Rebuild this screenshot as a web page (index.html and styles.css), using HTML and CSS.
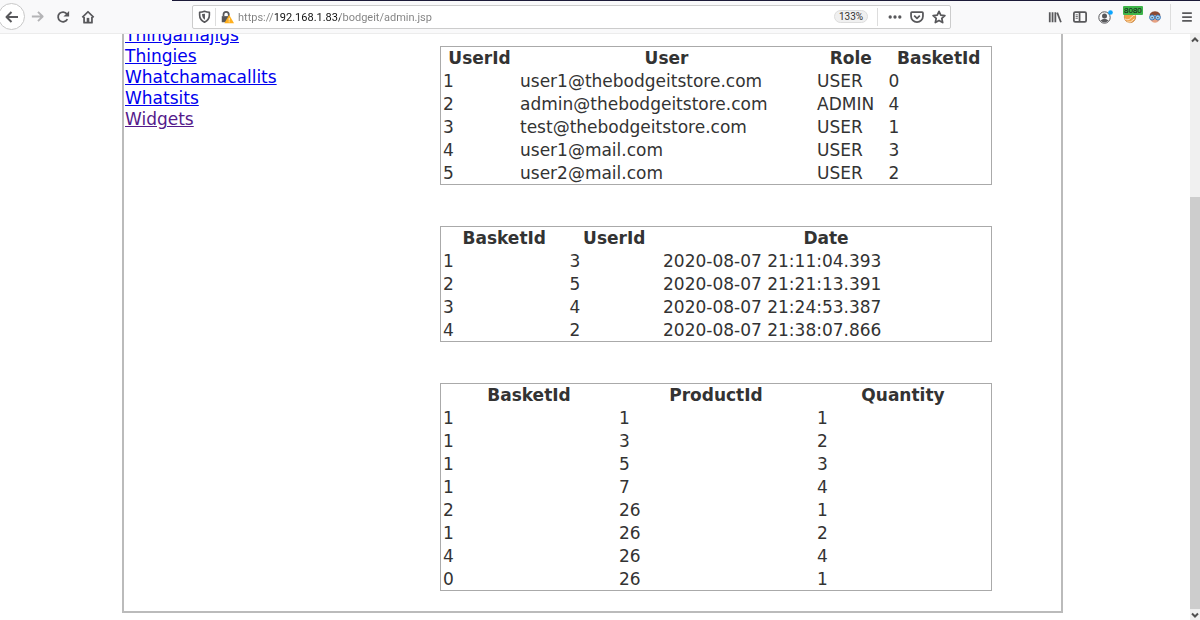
FILE: index.html
```
<!DOCTYPE html>
<html lang="en">

<head>
    <meta charset="utf-8">
    <title>The BodgeIt Store</title>
    <link rel="stylesheet" href="styles.css">
</head>

<body>

    <header class="toolbar">
        <div class="nav-buttons">
            <button class="tool-btn back-btn" aria-label="Back">
                <svg width="16" height="16" viewBox="0 0 16 16"><path d="M14 8H3M7.500 3L2.500 8l5 5" /></svg>
            </button>
            <button class="tool-btn disabled" aria-label="Forward" disabled>
                <svg width="15" height="15" viewBox="0 0 16 16"><path d="M2 8h11M8.500 3l5 5-5 5" /></svg>
            </button>
            <button class="tool-btn" aria-label="Reload">
                <svg width="14" height="14" viewBox="0 0 16 16"><path d="M13 10.500A5.600 5.600 0 1 1 12.500 4.500" /><path class="solid" d="M15 1v6.500H8.500z" /></svg>
            </button>
            <button class="tool-btn" aria-label="Home">
                <svg width="14" height="14" viewBox="0 0 16 16"><path d="M1.500 8.500L8 2l6.500 6.500M3.500 8v6.500h9V8" /><path class="solid" d="M6.500 9h3v5.500h-3z" /></svg>
            </button>
        </div>

        <div class="url-bar">
            <button class="tool-btn" aria-label="Tracking protection">
                <svg width="13" height="13" viewBox="0 0 16 16"><path d="M8 1.500Q11 2.500 14 2.800V6c0 4.500-2 7-6 9-4-2-6-4.500-6-9V2.800Q5 2.500 8 1.500z" /><path class="solid" d="M8.500 4.500v7.500c-2.500-1.500-3.500-3.500-3.500-7z" /></svg>
            </button>
            <span class="divider"></span>
            <button class="tool-btn" aria-label="Site information">
                <svg width="14" height="14" viewBox="0 0 16 16"><path d="M4 7V5a3 3 0 0 1 6 0v2" /><path class="solid" d="M2 7h9v7H2z" /><path class="warn" d="M10.500 5.500L16 15H5z" /><path class="warn-mark" d="M10.500 9v3M10.500 13v1" /></svg>
            </button>
            <input class="url-input" type="text" aria-label="Address" value="https://192.168.1.83/bodgeit/admin.jsp">
            <button class="zoom-btn">133%</button>
            <span class="divider actions-divider"></span>
            <button class="tool-btn" aria-label="Page actions">
                <svg width="14" height="14" viewBox="0 0 16 16"><circle class="solid" cx="2.500" cy="8" r="1.900" /><circle class="solid" cx="8" cy="8" r="1.900" /><circle class="solid" cx="13.500" cy="8" r="1.900" /></svg>
            </button>
            <button class="tool-btn" aria-label="Save to Pocket">
                <svg width="14" height="14" viewBox="0 0 16 16"><path d="M2.200 2.500h11.600q1 0 1 1V7a6.800 6.800 0 0 1-13.600 0V3.500q0-1 1-1zM4.800 6.500L8 9.600l3.200-3.100" /></svg>
            </button>
            <button class="tool-btn" aria-label="Bookmark this page">
                <svg width="14" height="14" viewBox="0 0 16 16"><path d="M8 1.500l2 4.400 4.700.5-3.500 3.200 1 4.800L8 12l-4.200 2.400 1-4.800L1.300 6.400 6 5.900z" /></svg>
            </button>
        </div>

        <div class="tools">
            <button class="tool-btn" aria-label="Library">
                <svg width="14" height="14" viewBox="0 0 16 16"><path d="M2 2.500V14M5.200 2.500V14M8.400 2.500V14M10.500 3l4.300 11" /></svg>
            </button>
            <button class="tool-btn" aria-label="Sidebars">
                <svg width="14" height="14" viewBox="0 0 16 16"><rect x="1" y="2.500" width="14" height="11" rx="1.500" /><path d="M7.500 3v10" /><path class="thin" d="M3 5.500h2.500M3 7.500h2.500M3 9.500h2.500" /></svg>
            </button>
            <button class="tool-btn" aria-label="Account">
                <svg width="16" height="16" viewBox="0 0 16 16"><circle class="thin" cx="7.500" cy="8.500" r="5.700" /><circle class="solid" cx="7.500" cy="7" r="2.500" /><path class="solid" d="M3.500 11.500q4-3.500 8 0-4 4-8 0z" /><circle class="notice" cx="13.500" cy="3.500" r="2.300" /></svg>
            </button>
            <button class="tool-btn proxy-btn" aria-label="Proxy">
                <svg width="14" height="14" viewBox="0 0 16 16"><circle class="fox" cx="8" cy="8" r="6.500" /><path class="fox-tail" d="M2 10q4 3 7-1t5-3M4 14q5 1 9-4" /></svg>
                <span class="badge">8080</span>
            </button>
            <button class="tool-btn" aria-label="Extension">
                <svg width="14" height="14" viewBox="0 0 16 16"><path class="face" d="M3 6h10v6q-5 5-10 0z" /><path class="hair" d="M2 8Q1 2 8 1.500 15 2 14 8l-2-2H4z" /><circle class="glass" cx="4.700" cy="8.500" r="2.900" /><circle class="glass" cx="11.300" cy="8.500" r="2.900" /><path class="solid" d="M4 8h1.500v1.500H4zM10.500 8H12v1.500h-1.500z" /></svg>
            </button>
            <span class="divider menu-divider"></span>
            <button class="tool-btn" aria-label="Open menu">
                <svg width="14" height="14" viewBox="0 0 16 16"><path d="M2.500 3.500h11M2.500 8h11M2.500 12.500h11" /></svg>
            </button>
        </div>
    </header>

    <div class="window">
        <div class="viewport">
            <main class="page">
                <nav class="categories">
                    <a href="product.jsp?typeid=6">Thingamajigs</a>
                    <a href="product.jsp?typeid=3">Thingies</a>
                    <a href="product.jsp?typeid=5">Whatchamacallits</a>
                    <a href="product.jsp?typeid=4">Whatsits</a>
                    <a class="seen" href="product.jsp?typeid=1">Widgets</a>
                </nav>

                <section class="admin">
                    <table class="users">
                        <tr><th>UserId</th><th>User</th><th>Role</th><th>BasketId</th></tr>
                        <tr><td>1</td><td>user1@thebodgeitstore.com</td><td>USER</td><td>0</td></tr>
                        <tr><td>2</td><td>admin@thebodgeitstore.com</td><td>ADMIN</td><td>4</td></tr>
                        <tr><td>3</td><td>test@thebodgeitstore.com</td><td>USER</td><td>1</td></tr>
                        <tr><td>4</td><td>user1@mail.com</td><td>USER</td><td>3</td></tr>
                        <tr><td>5</td><td>user2@mail.com</td><td>USER</td><td>2</td></tr>
                    </table>

                    <table class="baskets">
                        <tr><th>BasketId</th><th>UserId</th><th>Date</th></tr>
                        <tr><td>1</td><td>3</td><td>2020-08-07 21:11:04.393</td></tr>
                        <tr><td>2</td><td>5</td><td>2020-08-07 21:21:13.391</td></tr>
                        <tr><td>3</td><td>4</td><td>2020-08-07 21:24:53.387</td></tr>
                        <tr><td>4</td><td>2</td><td>2020-08-07 21:38:07.866</td></tr>
                    </table>

                    <table class="contents">
                        <tr><th>BasketId</th><th>ProductId</th><th>Quantity</th></tr>
                        <tr><td>1</td><td>1</td><td>1</td></tr>
                        <tr><td>1</td><td>3</td><td>2</td></tr>
                        <tr><td>1</td><td>5</td><td>3</td></tr>
                        <tr><td>1</td><td>7</td><td>4</td></tr>
                        <tr><td>2</td><td>26</td><td>1</td></tr>
                        <tr><td>1</td><td>26</td><td>2</td></tr>
                        <tr><td>4</td><td>26</td><td>4</td></tr>
                        <tr><td>0</td><td>26</td><td>1</td></tr>
                    </table>
                </section>
            </main>
        </div>

        <div class="scrollbar">
            <button class="scroll-btn" aria-label="Scroll up">
                <svg width="8" height="8" viewBox="0 0 8 8"><path d="M1 5.500l3-3 3 3" /></svg>
            </button>
            <div class="track">
                <div class="thumb"></div>
            </div>
            <button class="scroll-btn" aria-label="Scroll down">
                <svg width="8" height="8" viewBox="0 0 8 8"><path d="M1 2.500l3 3 3-3" /></svg>
            </button>
        </div>
    </div>

</body>

</html>
```

FILE: styles.css
```
* {
    box-sizing: border-box;
}

body {
    margin: 0;
    height: 100vh;
    display: flex;
    flex-direction: column;
    overflow: hidden;
    background-color: #fff;
    color: #333;
    font-family: Verdana, "DejaVu Sans", sans-serif;
    font-size: 17px;
}

button {
    padding: 0;
    border: none;
    background: none;
    cursor: pointer;
}

/* browser toolbar */
.toolbar {
    display: flex;
    align-items: center;
    height: 34px;
    flex: none;
    padding-right: 1px;
    background: linear-gradient(#1c1a38, #1c1a38) 172px 0 / 100% 1px no-repeat #f9f9fa;
    border-bottom: 1px solid #ececec;
    font-family: "Segoe UI", Roboto, sans-serif;
}

.nav-buttons,
.tools {
    display: flex;
    align-items: center;
    flex: none;
}

.tool-btn {
    display: flex;
    align-items: center;
    justify-content: center;
    flex: none;
    width: 25px;
    height: 26px;
}

.tool-btn svg {
    fill: none;
    stroke: #58585b;
    stroke-width: 2;
    stroke-linejoin: round;
}

.tool-btn .solid {
    fill: #58585b;
    stroke: none;
}

.tool-btn .thin {
    stroke-width: 1;
}

.disabled svg {
    stroke: #b4b4b6;
}

.back-btn {
    width: 27px;
    height: 27px;
    margin-left: -2px;
    border: 1px solid #c8c8c8;
    border-radius: 50%;
    background-color: #fff;
}

.url-bar {
    display: flex;
    align-items: center;
    flex: 1;
    height: 24px;
    margin: 0 91px 0 92px;
    border: 1px solid #ccc;
    border-radius: 2px;
    background-color: #fff;
}

.url-bar .tool-btn {
    width: 22px;
    height: 22px;
}

.divider {
    width: 1px;
    height: 18px;
    background-color: #ddd;
}

.actions-divider {
    margin-right: 6px;
}

/* the host part of the address is darker than the rest */
.url-input {
    flex: 1;
    min-width: 0;
    height: 24px;
    padding: 2px 0 0;
    border: none;
    outline: none;
    font-family: inherit;
    font-size: 11px;
    color: transparent;
    caret-color: #333;
    background: linear-gradient(90deg, #808080 37px, #111 37px, #111 102px, #808080 102px);
    -webkit-background-clip: text;
    background-clip: text;
}

.zoom-btn {
    width: 34px;
    height: 13px;
    margin-right: 9px;
    border: 1px solid #ddd;
    border-radius: 8px;
    background-color: #f0f0f0;
    color: #333;
    font-family: inherit;
    font-size: 10px;
    line-height: 11px;
}

.tool-btn .warn {
    fill: #ffb01f;
    stroke: none;
}

.tool-btn .warn-mark {
    stroke: #fff;
    stroke-width: 1;
}

.notice {
    fill: #0aa5ff;
    stroke: none;
}

.fox {
    fill: #f2a34b;
    stroke: #c98a4a;
    stroke-width: 1;
}

.fox-tail {
    stroke: #fff0d8;
    stroke-width: 1;
}

.face {
    fill: #e7a283;
    stroke: none;
}

.hair {
    fill: #8c4a32;
    stroke: none;
}

.glass {
    fill: #9fd0f5;
    stroke: #2f6fb4;
    stroke-width: 1;
}

.proxy-btn {
    position: relative;
}

.badge {
    position: absolute;
    top: 2px;
    left: 6px;
    padding: 0 1px;
    border-radius: 1px;
    background-color: #3fb54a;
    color: #111;
    font-family: "Liberation Sans", sans-serif;
    font-size: 8px;
    line-height: 9px;
}

.menu-divider {
    height: 26px;
    margin: 0 3px;
}

/* page */
.window {
    display: flex;
    flex: 1;
    min-height: 0;
}

.viewport {
    flex: 1;
    overflow: hidden;
    padding: 0 127px 0 122px;
}

.page {
    display: flex;
    border: 2px solid #bbb;
    border-top: none;
}

/* the list starts a little above the visible part of the page */
.categories {
    width: 247px;
    flex: none;
    margin-top: -9px;
    padding-left: 1px;
    line-height: 21px;
}

.categories a {
    display: table;
    color: #00e;
}

.categories .seen {
    color: #551a8b;
}

.admin {
    display: flex;
    flex: 1;
    flex-direction: column;
    align-items: center;
    gap: 41px;
    padding: 12px 0 20px;
}

table {
    width: 80%;
    table-layout: fixed;
    border: 1px solid #aaa;
    border-spacing: 0;
}

th,
td {
    height: 23px;
    padding: 0 2px;
    line-height: 22px;
    text-align: left;
}

th {
    height: 22px;
    text-align: center;
}

.users th:nth-child(1) {
    width: 14%;
}

.users th:nth-child(2) {
    width: 54%;
}

.users th:nth-child(3) {
    width: 13%;
}

.baskets th:nth-child(1) {
    width: 23%;
}

.baskets th:nth-child(2) {
    width: 17%;
}

.contents th:nth-child(1) {
    width: 32%;
}

.contents th:nth-child(2) {
    width: 36%;
}

/* scrollbar */
.scrollbar {
    display: flex;
    flex-direction: column;
    width: 10px;
    background-color: #f0f0f0;
}

.scroll-btn {
    display: flex;
    align-items: center;
    justify-content: center;
    height: 11px;
}

.scroll-btn svg {
    fill: none;
    stroke: #505050;
    stroke-width: 2;
}

.track {
    display: flex;
    flex: 1;
    flex-direction: column;
    justify-content: flex-end;
}

.thumb {
    height: 73%;
    background-color: #cdcdcd;
}
```
